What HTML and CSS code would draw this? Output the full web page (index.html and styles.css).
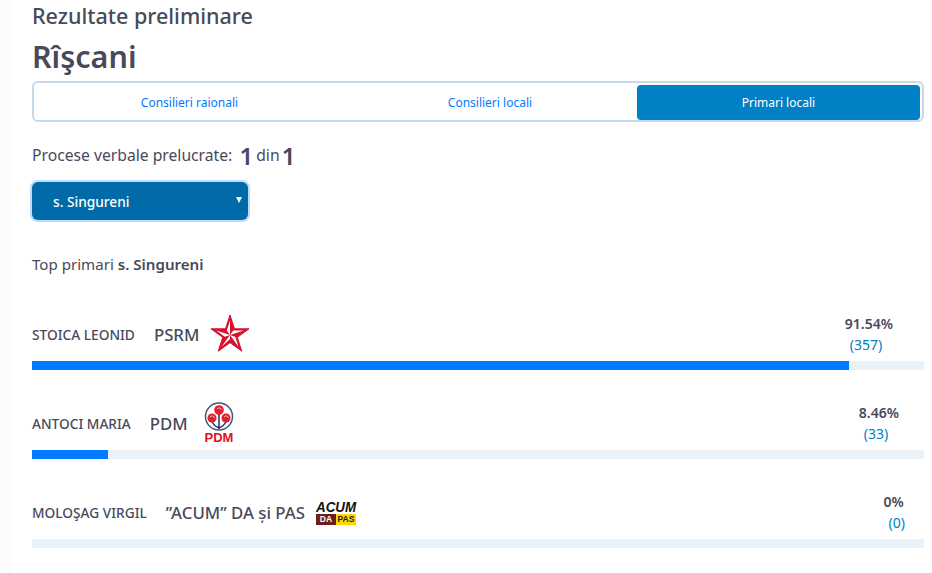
FILE: index.html
```html
<!DOCTYPE html>
<html lang="en">

<head>
  <meta charset="UTF-8">
  <title>Rezultate preliminare</title>
  <link rel="stylesheet" href="styles.css">
</head>

<body>
  <main class="page">
    <h2 class="subtitle">Rezultate preliminare</h2>
    <h1 class="title">Rîşcani</h1>

    <!-- Tabs -->
    <nav class="tabs">
      <a class="tab" href="#">Consilieri raionali</a>
      <a class="tab" href="#">Consilieri locali</a>
      <a class="tab tab-active" href="#">Primari locali</a>
    </nav>

    <p class="processed">Procese verbale prelucrate: <b class="big first">1</b> din <b class="big last">1</b></p>

    <div class="select">
      <span>s. Singureni</span>
      <span class="caret"></span>
    </div>

    <p class="top">Top primari <b>s. Singureni</b></p>

    <!-- Candidates -->
    <section class="candidate candidate-first">
      <div class="candidate-row">
        <span class="name">STOICA LEONID</span>
        <span class="party">PSRM</span>
        <svg class="logo" width="40" height="40" viewBox="0 0 40 40">
          <polygon fill="#d5122e" stroke="#d5122e" points="20,1 24.490,14.820 39.020,14.820 27.270,23.360 31.760,37.180 20,28.640 8.240,37.180 12.730,23.360 0.980,14.820 15.510,14.820" />
          <polygon fill="#fff" points="20,21 20,6.600 16.770,16.550" />
          <polygon fill="#fff" points="20,21 33.700,16.550 23.230,16.550" />
          <polygon fill="#fff" points="20,21 28.470,32.650 25.230,22.700" />
          <polygon fill="#fff" points="20,21 11.530,32.650 20,24.960" />
          <polygon fill="#fff" points="20,21 6.300,16.550 14.770,22.700" />
        </svg>
        <div class="stat stat-psrm">
          <b>91.54%</b>
          <span class="count">(357)</span>
        </div>
      </div>
      <div class="bar"><div class="bar-fill" style="width: 91.6%"></div></div>
    </section>

    <section class="candidate">
      <div class="candidate-row">
        <span class="name">ANTOCI MARIA</span>
        <span class="party">PDM</span>
        <svg class="logo logo-pdm" width="30" height="42" viewBox="0 0 30 42">
          <circle cx="15" cy="14.500" r="13.500" fill="#fff" stroke="#4a5578" stroke-width="1.500" />
          <path d="M15 12V27M8 20C10 24 13 25 15 26M22 20C20 24 17 25 15 26" fill="none" stroke="#27305f" stroke-width="1.500" />
          <circle cx="15" cy="8" r="4.800" fill="#e3202e" />
          <circle cx="8" cy="16" r="4.500" fill="#e3202e" />
          <circle cx="22" cy="16" r="4.500" fill="#e3202e" />
          <path d="M13 7A2.500 2.500 0 0 1 17.500 8M6 15A2.500 2.500 0 0 1 10.500 16M20 15A2.500 2.500 0 0 1 24.500 16" fill="none" stroke="#f7b1b8" />
          <text class="pdm-text" x="15" y="40" text-anchor="middle">PDM</text>
        </svg>
        <div class="stat stat-pdm">
          <b>8.46%</b>
          <span class="count">(33)</span>
        </div>
      </div>
      <div class="bar"><div class="bar-fill" style="width: 8.5%"></div></div>
    </section>

    <section class="candidate">
      <div class="candidate-row">
        <span class="name">MOLOŞAG VIRGIL</span>
        <span class="party">”ACUM” DA și PAS</span>
        <div class="acum">
          <span class="acum-top">ACUM</span>
          <div class="acum-bottom"><span class="acum-da">DA</span><span class="acum-pas">PAS</span></div>
        </div>
        <div class="stat stat-acum">
          <b>0%</b>
          <span class="count">(0)</span>
        </div>
      </div>
      <div class="bar"></div>
    </section>
  </main>
</body>

</html>
```

FILE: styles.css
```css
/* General Reset */
* {
  margin: 0;
  padding: 0;
  box-sizing: border-box;
}

body {
  font-family: "Noto Sans", "Open Sans", sans-serif;
  color: #484a5a;
  background-color: #fcfcfc;
  overflow: hidden;
}

.page {
  height: 573px;
  margin-left: 12px;
  padding: 0 8px 0 20px;
  background-color: #fff;
}

/* Headings */
.subtitle {
  font-size: 21.500px;
  font-weight: 500;
  line-height: 32px;
}

.title {
  font-size: 30.500px;
  font-weight: 600;
  line-height: 49px;
}

/* Tabs */
.tabs {
  display: flex;
  height: 41px;
  padding: 2px 2px 0;
  border: 2px solid #c5daef;
  border-radius: 6px;
}

.tab {
  flex: 1 1 auto;
  display: flex;
  align-items: center;
  justify-content: center;
  color: #007bff;
  font-size: 12px;
  text-decoration: none;
  border-radius: 4px;
}

.tab-active {
  color: #fff;
  background-color: #0080c5;
}

/* Counters */
.processed {
  display: flex;
  align-items: center;
  height: 30px;
  margin-top: 18px;
  font-size: 15.700px;
  white-space: pre;
}

.big {
  font-size: 24px;
  font-weight: 600;
}

.first {
  margin: 0 -1px 0 3px;
}

.last {
  margin-left: -2px;
}

.select {
  display: flex;
  align-items: center;
  justify-content: space-between;
  width: 216px;
  height: 38px;
  margin-top: 12px;
  padding: 0 6px 0 21px;
  color: #fff;
  font-size: 13.700px;
  font-weight: 500;
  background-color: #006ba8;
  border-radius: 6px;
  box-shadow: 0 0 0 2px #bcdcfb;
}

.caret {
  width: 0;
  height: 0;
  margin-bottom: 3px;
  border-top: 6px solid #fff;
  border-left: 3.500px solid transparent;
  border-right: 3.500px solid transparent;
}

.top {
  margin-top: 33px;
  font-size: 15.100px;
  line-height: 22px;
}

.top b {
  font-weight: 600;
}

/* Candidates */
.candidate-first {
  margin-top: 32px;
}

.candidate-row {
  display: flex;
  align-items: center;
  height: 54px;
  margin-top: 26px;
}

.candidate-first .candidate-row {
  margin-top: 0;
}

.name {
  font-size: 13.700px;
  font-weight: 500;
  white-space: nowrap;
}

.party {
  margin-left: 19px;
  font-size: 16.800px;
  font-weight: 500;
  white-space: nowrap;
}

.logo {
  margin-left: 11px;
}

.logo-pdm {
  margin-left: 16px;
}

.pdm-text {
  font-family: "Liberation Sans", sans-serif;
  font-size: 13px;
  font-weight: 700;
  fill: #e3101e;
}

/* ACUM logo */
.acum {
  width: 40px;
  margin-left: 11px;
  font-family: "Liberation Sans", sans-serif;
  font-weight: 700;
}

.acum-top {
  display: block;
  color: #111;
  font-size: 15.500px;
  font-style: italic;
  line-height: 15px;
  white-space: nowrap;
  transform: scaleX(0.86);
  transform-origin: left;
}

.acum-bottom {
  display: flex;
  font-size: 8.500px;
  line-height: 11px;
  text-align: center;
}

.acum-da {
  flex: 1;
  color: #fff;
  background-color: #6d1d1a;
}

.acum-pas {
  flex: 1;
  color: #222;
  background-color: #ffd800;
}

.stat {
  display: flex;
  flex-direction: column;
  align-items: flex-start;
  margin-left: auto;
  font-size: 14px;
  line-height: 21px;
}

.stat b {
  font-weight: 600;
}

.count {
  padding-left: 5px;
  color: #0080c5;
}

.stat-psrm {
  margin-right: 31px;
}

.stat-pdm {
  margin-right: 25px;
}

.stat-acum {
  margin-right: 19px;
}

/* Progress bars */
.bar {
  height: 9px;
  background-color: #e9f1f9;
}

.bar-fill {
  height: 100%;
  background-color: #007bff;
}
```
